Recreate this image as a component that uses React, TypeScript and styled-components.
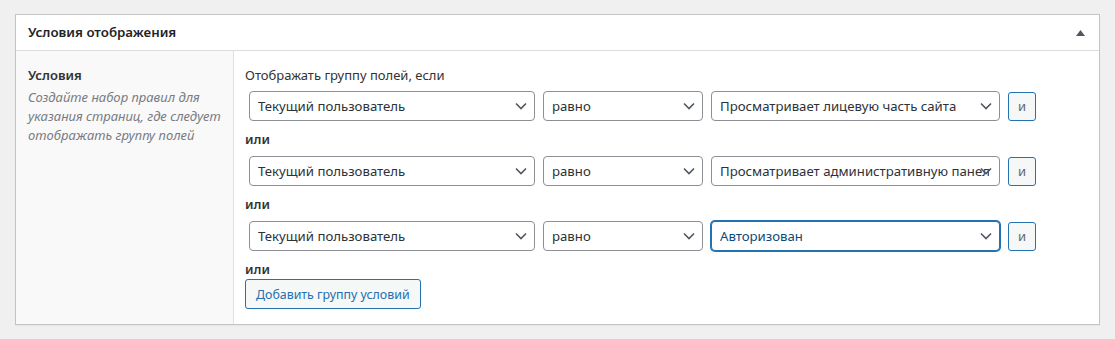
import React from 'react';
import styled, { createGlobalStyle } from 'styled-components';

interface Rule {
  param: string;
  operator: string;
  value: string;
  focused?: boolean;
}

const rules: Rule[] = [
  { param: 'Текущий пользователь', operator: 'равно', value: 'Просматривает лицевую часть сайта' },
  { param: 'Текущий пользователь', operator: 'равно', value: 'Просматривает административную панель' },
  { param: 'Текущий пользователь', operator: 'равно', value: 'Авторизован', focused: true },
];

const Chevron = () => (
  <ChevronIcon width="12" height="8" viewBox="0 0 12 8" aria-hidden>
    <polyline points="1,1.5 6,6.5 11,1.5" fill="none" stroke="#50575e" strokeWidth="1.6" />
  </ChevronIcon>
);

const Select = ({ value, width, focused }: { value: string; width: number; focused?: boolean }) => (
  <SelectWrap $width={width}>
    <SelectBox defaultValue={value} $focused={focused}>
      <option value={value}>{value}</option>
    </SelectBox>
    <Chevron />
  </SelectWrap>
);

const App = () => {
  return (
    <>
      <GlobalStyle />
      <Postbox>
        <PostboxHeader>
          <Title>Условия отображения</Title>
          <svg width="9" height="6" viewBox="0 0 9 6" aria-hidden>
            <polygon points="4.5,0 9,6 0,6" fill="#50575e" />
          </svg>
        </PostboxHeader>

        <Field>
          <LabelCol>
            <FieldLabel>Условия</FieldLabel>
            <Description>Создайте набор правил для указания страниц, где следует отображать группу полей</Description>
          </LabelCol>

          <InputCol>
            {rules.map((rule, i) => (
              <React.Fragment key={i}>
                {i === 0 ? <GroupTitle>Отображать группу полей, если</GroupTitle> : <OrLabel>или</OrLabel>}
                <RuleRow>
                  <Select value={rule.param} width={286} />
                  <Select value={rule.operator} width={160} />
                  <Select value={rule.value} width={289} focused={rule.focused} />
                  <AndButton type="button">и</AndButton>
                </RuleRow>
              </React.Fragment>
            ))}
            <OrLabel $last>или</OrLabel>
            <AddGroupButton type="button">Добавить группу условий</AddGroupButton>
          </InputCol>
        </Field>
      </Postbox>
    </>
  );
};

export default App;

const GlobalStyle = createGlobalStyle`
  body {
    margin: 0;
    background: #f0f0f1;
    font-family: "Noto Sans", "Open Sans", sans-serif;
    color: #1d2327;
  }
`;

const Postbox = styled.div`
  margin: 14px 15px;
  background: #fff;
  border: 1px solid #c3c4c7;
  box-shadow: 0 1px 1px rgba(0, 0, 0, 0.04);
`;

const PostboxHeader = styled.div`
  display: flex;
  align-items: center;
  justify-content: space-between;
  height: 35px;
  padding: 0 14px 0 12px;
  border-bottom: 1px solid #dcdcde;
`;

const Title = styled.h2`
  margin: 0;
  font-size: 13.3px;
  font-weight: 600;
  line-height: 1.4;
  color: #1d2327;
`;

const Field = styled.div`
  display: flex;
`;

const LabelCol = styled.div`
  flex-shrink: 0;
  width: 193px;
  padding: 15px 12px;
  background: #f9f9f9;
  border-right: 1px solid #e1e1e1;
`;

const FieldLabel = styled.label`
  display: block;
  margin-bottom: 4px;
  font-size: 13px;
  font-weight: 600;
  line-height: 18px;
  color: #333;
`;

const Description = styled.p`
  margin: 0;
  font-size: 13px;
  font-style: italic;
  line-height: 19px;
  color: #787c82;
`;

const InputCol = styled.div`
  flex: 1;
  padding: 15px 12px 15px 11px;
`;

const GroupTitle = styled.h4`
  margin: 0 0 3px;
  font-size: 13px;
  font-weight: 400;
  line-height: 18px;
  color: #333;
`;

const OrLabel = styled.h4<{ $last?: boolean }>`
  margin: 5px 0 ${({ $last }) => ($last ? '1px' : '4px')};
  font-size: 13px;
  font-weight: 600;
  line-height: 18px;
  color: #333;
`;

const RuleRow = styled.div`
  display: flex;
  align-items: center;
  gap: 8px;
  padding: 4px;
`;

const SelectWrap = styled.div<{ $width: number }>`
  position: relative;
  width: ${({ $width }) => $width}px;
  flex-shrink: 0;
`;

const SelectBox = styled.select<{ $focused?: boolean }>`
  appearance: none;
  display: block;
  box-sizing: border-box;
  width: 100%;
  height: 30px;
  padding: 0 10px 0 8px;
  font-family: inherit;
  font-size: 13.2px;
  color: ${({ $focused }) => ($focused ? '#0a4b78' : '#2c3338')};
  background: #fff;
  border: 1px solid ${({ $focused }) => ($focused ? '#2271b1' : '#8c8f94')};
  border-radius: 4px;
  box-shadow: ${({ $focused }) => ($focused ? '0 0 0 1px #2271b1' : 'none')};
  outline: none;
`;

const ChevronIcon = styled.svg`
  position: absolute;
  right: 8px;
  top: 11px;
  pointer-events: none;
`;

const AndButton = styled.button`
  box-sizing: border-box;
  width: 28px;
  height: 29px;
  padding: 0;
  font-family: inherit;
  font-size: 13px;
  color: #646970;
  background: #f6f7f7;
  border: 1px solid #2271b1;
  border-radius: 3px;
`;

const AddGroupButton = styled.button`
  box-sizing: border-box;
  height: 30px;
  padding: 0 10px;
  font-family: inherit;
  font-size: 12.4px;
  color: #2271b1;
  background: #f6f7f7;
  border: 1px solid #2271b1;
  border-radius: 3px;
`;
